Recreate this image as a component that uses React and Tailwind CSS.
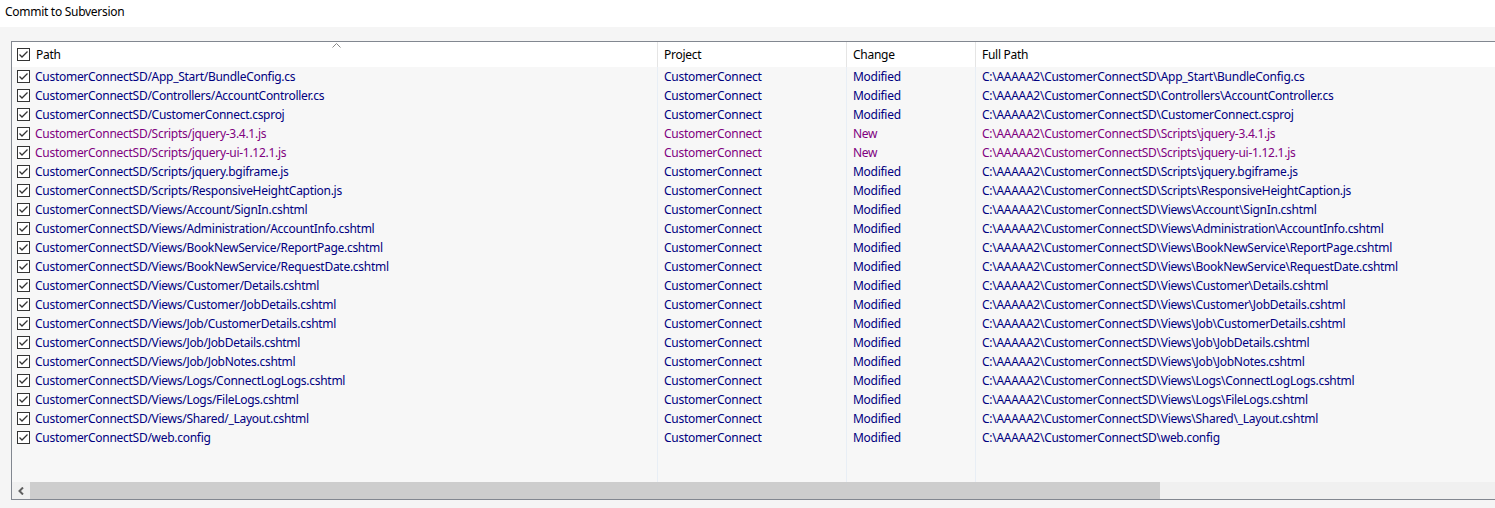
const files = [
    ['App_Start/BundleConfig.cs', 'Modified'],
    ['Controllers/AccountController.cs', 'Modified'],
    ['CustomerConnect.csproj', 'Modified'],
    ['Scripts/jquery-3.4.1.js', 'New'],
    ['Scripts/jquery-ui-1.12.1.js', 'New'],
    ['Scripts/jquery.bgiframe.js', 'Modified'],
    ['Scripts/ResponsiveHeightCaption.js', 'Modified'],
    ['Views/Account/SignIn.cshtml', 'Modified'],
    ['Views/Administration/AccountInfo.cshtml', 'Modified'],
    ['Views/BookNewService/ReportPage.cshtml', 'Modified'],
    ['Views/BookNewService/RequestDate.cshtml', 'Modified'],
    ['Views/Customer/Details.cshtml', 'Modified'],
    ['Views/Customer/JobDetails.cshtml', 'Modified'],
    ['Views/Job/CustomerDetails.cshtml', 'Modified'],
    ['Views/Job/JobDetails.cshtml', 'Modified'],
    ['Views/Job/JobNotes.cshtml', 'Modified'],
    ['Views/Logs/ConnectLogLogs.cshtml', 'Modified'],
    ['Views/Logs/FileLogs.cshtml', 'Modified'],
    ['Views/Shared/_Layout.cshtml', 'Modified'],
    ['web.config', 'Modified'],
];

const Check = () => (
    <svg width="13" height="13" viewBox="0 0 13 13" className="shrink-0">
        <rect x="0.5" y="0.5" width="12" height="12" fill="#fff" stroke="#333" />
        <path d="M2.5 6.5 L5 9 L10.5 3.5" fill="none" stroke="#333" strokeWidth="1.3" />
    </svg>
);

const App = () => {
    return (
        <div className="w-[1495px] h-[508px] overflow-hidden bg-[#f5f5f5] text-[12px] tracking-[-0.28px] text-black" style={{ fontFamily: '"Noto Sans", sans-serif' }}>
            <div className="h-[27px] bg-white px-[5px] pb-[4px] flex items-center">Commit to Subversion</div>

            <div className="pl-[11px] pt-[14px]">
                <div className="h-[459px] border-l border-t border-b border-[#828790] flex flex-col">
                    {/* header */}
                    <div className="h-[25px] bg-white flex shrink-0 relative">
                        <div className="w-[646px] border-r border-[#e5e5e5] flex items-center pl-[5px] gap-[6px]">
                            <Check />
                            <span>Path</span>
                        </div>
                        <div className="w-[189px] border-r border-[#e5e5e5] flex items-center pl-[6px]">Project</div>
                        <div className="w-[129px] border-r border-[#e5e5e5] flex items-center pl-[6px]">Change</div>
                        <div className="flex-1 flex items-center pl-[6px]">Full Path</div>
                        <svg width="9" height="5" viewBox="0 0 9 5" className="absolute left-[320px] top-[1px]">
                            <path d="M0.5 4.5 L4.5 0.5 L8.5 4.5" fill="none" stroke="#888" strokeWidth="1" />
                        </svg>
                    </div>

                    {/* rows */}
                    <div className="flex-1 flex flex-col bg-[#f7f7f7]">
                        {files.map(([f, change], i) => {
                            const color = change === 'New' ? 'text-[#800080]' : 'text-[#000080]';
                            return (
                                <div key={i} className={`h-[19px] flex shrink-0 ${color}`}>
                                    <div className="w-[646px] border-r border-[#e8eef5] flex items-center pl-[5px] gap-[5px]">
                                        <Check />
                                        <span className="whitespace-nowrap">CustomerConnectSD/{f}</span>
                                    </div>
                                    <div className="w-[189px] border-r border-[#e8eef5] flex items-center pl-[6px]">CustomerConnect</div>
                                    <div className="w-[129px] border-r border-[#e8eef5] flex items-center pl-[6px]">{change}</div>
                                    <div className="flex-1 flex items-center pl-[6px] whitespace-nowrap">
                                        C:\AAAAA2\CustomerConnectSD\{f.replaceAll('/', '\\')}
                                    </div>
                                </div>
                            );
                        })}
                        <div className="flex-1 flex">
                            <div className="w-[646px] border-r border-[#e8eef5]" />
                            <div className="w-[189px] border-r border-[#e8eef5]" />
                            <div className="w-[129px] border-r border-[#e8eef5]" />
                            <div className="flex-1" />
                        </div>
                    </div>

                    {/* horizontal scrollbar */}
                    <div className="h-[17px] flex shrink-0 bg-[#f0f0f0]">
                        <div className="w-[18px] flex items-center justify-center">
                            <svg width="7" height="8" viewBox="0 0 7 8">
                                <path d="M5 0.5 L1.5 4 L5 7.5" fill="none" stroke="#606060" strokeWidth="2" />
                            </svg>
                        </div>
                        <div className="w-[1130px] bg-[#cdcdcd]" />
                        <div className="flex-1" />
                    </div>
                </div>
            </div>
        </div>
    );
};

export default App;
